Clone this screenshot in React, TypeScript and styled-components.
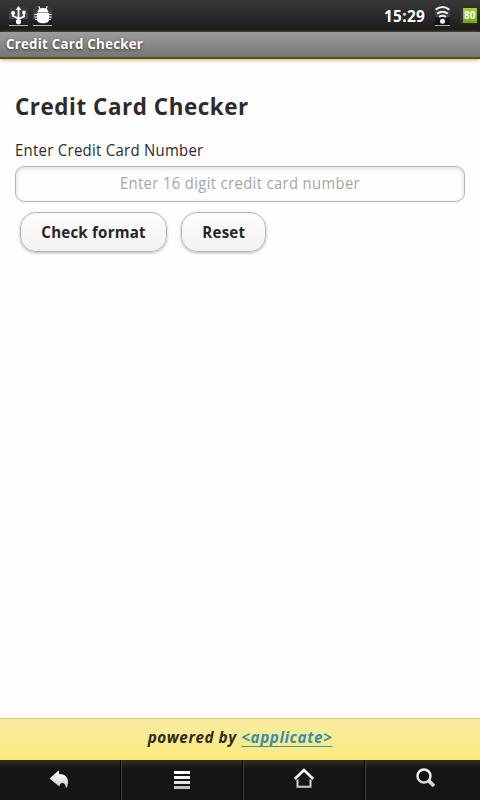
import React from "react";
import styled, { createGlobalStyle } from "styled-components";

const GlobalStyle = createGlobalStyle`
  *, *::before, *::after { box-sizing: border-box; }
  html, body { margin: 0; padding: 0; background: #fefefe; }
  body { font-family: "Open Sans", "Noto Sans", sans-serif; color: #2b2b2b; }
`;

const Screen = styled.div`
  display: flex;
  flex-direction: column;
  width: 480px;
  height: 800px;
  overflow: hidden;
  background: #fefefe;
`;

/* Narrow lettering: squeezes its text towards the given edge. */
const Narrow = styled.span<{ $scale: number; $from?: "left" | "center" | "right" }>`
  display: inline-block;
  transform: scaleX(${({ $scale }) => $scale});
  transform-origin: ${({ $from = "left" }) => $from} center;
`;

const StatusBar = styled.header`
  display: flex;
  flex: none;
  align-items: flex-start;
  height: 32px;
  padding: 5px 2px 0 9px;
  background: linear-gradient(#383838, #2b2b2b 45%, #181818);
`;

const Notification = styled.div`
  width: 19px;
  height: 21px;
  margin-right: 5px;
  border-bottom: 1px solid #b5b5b5;
  background: linear-gradient(#303030, #505050 70%, #2a2a2a 71%, #1a1a1a);
  svg { display: block; }
`;

const Clock = styled.time`
  width: 42px;
  margin-left: auto;
  margin-right: 9px;
  font-weight: 700;
  font-size: 16px;
  line-height: 22px;
  letter-spacing: 0.35px;
  white-space: nowrap;
  color: #fff;
`;

const Signal = styled.div`
  width: 15px;
  height: 21px;
  border-bottom: 1px solid #b0b0b0;
  background: linear-gradient(#303030, #444 60%, #1c1c1c 61%, #111);
  svg { display: block; }
`;

const Battery = styled.div`
  width: 18px;
  height: 17px;
  margin: 2px 0 0 10px;
  border: 1px solid #26330c;
  border-left: 3px solid #33382b;
  border-radius: 2px;
  background: linear-gradient(#a9cf3c, #8aba24 50%, #76a617);
  font-weight: 700;
  font-size: 11px;
  line-height: 14px;
  padding-left: 1px;
  color: #fff;
`;

const TitleBar = styled.div`
  flex: none;
  height: 27px;
  padding-left: 6px;
  border-bottom: 2px solid #5c4a20;
  background: linear-gradient(#9c9c9c, #777);
  box-shadow: 0 1px 4px #c9a85f;
  font-weight: 700;
  font-size: 14px;
  line-height: 24px;
  letter-spacing: 0.25px;
  color: #fff;
  text-shadow: 0 1px 3px #333;
`;

const Content = styled.main`
  flex: 1;
  padding: 30px 15px 0;
`;

const Heading = styled.h1`
  margin: 0;
  font-size: 24px;
  line-height: 33px;
  letter-spacing: 0.6px;
`;

const Label = styled.label`
  display: block;
  margin-top: 17px;
  font-size: 16px;
  line-height: 22px;
  letter-spacing: 0.3px;
`;

const Field = styled.div`
  height: 36px;
  margin-top: 5px;
  border: 1px solid #b4b4b4;
  border-radius: 9px;
  box-shadow: inset 0 1px 4px rgba(0, 0, 0, 0.15);
`;

const NumberInput = styled.input`
  display: block;
  width: 100%;
  height: 32px;
  padding: 0;
  border: 0;
  outline: none;
  background: transparent;
  font-family: inherit;
  font-size: 16px;
  letter-spacing: 0.4px;
  text-align: center;
  transform: scaleX(0.924);
  &::placeholder { color: #a6a6a6; opacity: 1; }
`;

const Actions = styled.div`
  display: flex;
  gap: 14px;
  padding: 10px 5px 0;
`;

const Button = styled.button<{ $width: number }>`
  display: flex;
  align-items: center;
  justify-content: center;
  width: ${({ $width }) => $width}px;
  height: 40px;
  padding: 0 0 1px;
  border: 1px solid #b8b8b8;
  border-radius: 16px;
  background: linear-gradient(#fdfdfd, #f3f3f3);
  box-shadow: 0 1px 3px rgba(0, 0, 0, 0.3);
  font-family: inherit;
  font-weight: 700;
  font-size: 16px;
  letter-spacing: 0.25px;
  white-space: nowrap;
  color: #252525;
`;

const Footer = styled.footer`
  flex: none;
  height: 42px;
  border-top: 1px solid #ddc782;
  background: linear-gradient(#faeba3, #faeb7c);
  font-style: italic;
  font-weight: 700;
  font-size: 16px;
  line-height: 37px;
  letter-spacing: 0.6px;
  text-align: center;
  color: #302c1c;
`;

const Link = styled.a`
  color: #3490ac;
  text-decoration: underline;
  text-decoration-thickness: 1px;
  text-underline-offset: 3px;
  text-decoration-skip-ink: none;
`;

const NavBar = styled.nav`
  display: grid;
  flex: none;
  grid-template-columns: 121px 122px 122px 115px;
  height: 40px;
  background: linear-gradient(#34301d, #151515 8px, #151515);
`;

const NavItem = styled.div`
  display: flex;
  padding: 6px 0 0 48px;
  border-left: 1px solid #444;
  border-right: 1px solid #000;
  &:first-child { padding-left: 47px; border-left-color: transparent; }
  &:last-child { border-right: 0; }
`;

const Shine = ({ id }: { id: string }) => (
  <linearGradient id={id} x1="0" y1="0" x2="0" y2="24" gradientUnits="userSpaceOnUse">
    <stop offset=".3" stopColor="#fff" />
    <stop offset="1" stopColor="#b9bfbb" />
  </linearGradient>
);

const UsbIcon = () => (
  <svg width="19" height="20" viewBox="0 0 19 20" fill="none" stroke="#fff" strokeWidth="1.8">
    <path d="M9.5 17V4M9.5 14L15 11.5V7.5M9.5 13.5L4 11V8" />
    <path d="M9.5 1L12.3 5H6.7ZM13.3 5.8h3.2V9h-3.2Z" fill="#fff" stroke="none" />
    <circle cx="4.1" cy="8" r="2" fill="#fff" stroke="none" />
    <circle cx="9.5" cy="16.7" r="2.6" fill="#fff" stroke="none" />
  </svg>
);

const BugIcon = () => (
  <svg width="20" height="20" viewBox="0 0 20 20" fill="#fff">
    <path d="M4.6 7.4C4.6 4.6 6.7 3 10 3S15.4 4.6 15.4 7.4ZM4 8h12v6c0 2.9-2.3 4.3-6 4.3s-6-1.4-6-4.3Z" />
    <path d="M7 4L5.7 1.2M13 4L14.3 1.2M4.5 9.5H1.5M4.5 12H1.5M5 14.5H2M15.5 9.5h3M15.5 12h3M15 14.5h3" stroke="#fff" strokeWidth="1.2" />
  </svg>
);

const WifiIcon = () => (
  <svg width="15" height="20" viewBox="0 0 15 20" fill="none" stroke="#f4f4f4" strokeWidth="2">
    <path d="M.7 4.6Q7.5 -.4 14.3 4.6M2.2 8.6Q7.5 4.8 12.8 8.6M4 12Q7.5 9.6 11 12" />
    <circle cx="7.5" cy="16.3" r="2.5" fill="#fff" stroke="none" />
  </svg>
);

const BackIcon = () => (
  <svg width="24" height="24" viewBox="0 0 24 24">
    <defs><Shine id="back" /></defs>
    <path fill="url(#back)" d="M1.5 12.5L11 4.3V8C17 8 20 11.5 20 16C20 18.5 19.5 20.5 18 22.3C17.6 19 16.5 17 14.5 17C12.5 17 12 17.6 11.3 20.5Z" />
  </svg>
);

const MenuIcon = () => (
  <svg width="24" height="24" viewBox="0 0 24 24">
    <path fill="#fff" d="M4 5h16v3H4Z" />
    <path fill="#f6f6f6" d="M4 10h16v3H4Z" />
    <path fill="#e0e4e1" d="M4 15h16v3H4Z" />
    <path fill="#bcc2be" d="M4 20h16v3H4Z" />
  </svg>
);

const HomeIcon = () => (
  <svg width="24" height="24" viewBox="0 0 24 24" fill="none" strokeWidth="2">
    <defs><Shine id="home" /></defs>
    <path stroke="url(#home)" strokeWidth="2.6" d="M2.8 13L12 4.1L21.2 13" />
    <path stroke="url(#home)" d="M5.5 13.5V20.8H18.5V13.5" />
  </svg>
);

const SearchIcon = () => (
  <svg width="24" height="24" viewBox="0 0 24 24" fill="none">
    <defs><Shine id="search" /></defs>
    <circle cx="10" cy="10" r="6.5" stroke="url(#search)" strokeWidth="2.4" />
    <path d="M14.5 14.5L20 20" stroke="url(#search)" strokeWidth="3.8" />
  </svg>
);

export default function App() {
  return (
    <Screen>
      <GlobalStyle />
      <StatusBar>
        <Notification><UsbIcon /></Notification>
        <Notification><BugIcon /></Notification>
        <Clock><Narrow $scale={0.96}>15:29</Narrow></Clock>
        <Signal><WifiIcon /></Signal>
        <Battery><Narrow $scale={0.9}>80</Narrow></Battery>
      </StatusBar>
      <TitleBar><Narrow $scale={0.95}>Credit Card Checker</Narrow></TitleBar>
      <Content>
        <Heading><Narrow $scale={0.933}>Credit Card Checker</Narrow></Heading>
        <Label htmlFor="card-number"><Narrow $scale={0.933}>Enter Credit Card Number</Narrow></Label>
        <Field>
          <NumberInput id="card-number" placeholder="Enter 16 digit credit card number" />
        </Field>
        <Actions>
          <Button $width={147}><Narrow $scale={0.94} $from="center">Check format</Narrow></Button>
          <Button $width={85}><Narrow $scale={0.94} $from="center">Reset</Narrow></Button>
        </Actions>
      </Content>
      <Footer>
        <Narrow $scale={0.952} $from="center">powered by <Link>&lt;applicate&gt;</Link></Narrow>
      </Footer>
      <NavBar>
        <NavItem><BackIcon /></NavItem>
        <NavItem><MenuIcon /></NavItem>
        <NavItem><HomeIcon /></NavItem>
        <NavItem><SearchIcon /></NavItem>
      </NavBar>
    </Screen>
  );
}
